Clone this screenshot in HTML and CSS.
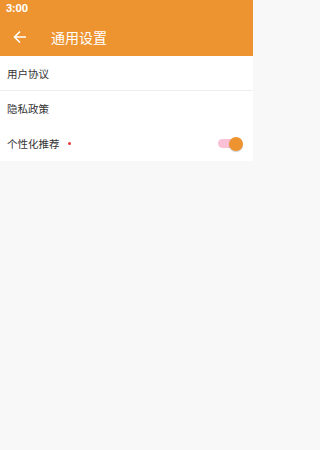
FILE: index.html
```html
<!DOCTYPE html>
<html lang="zh">
<head>
<meta charset="utf-8">
<link rel="stylesheet" href="styles.css">
</head>
<body>
<div class="page">
  <header class="top">
    <div class="status">3:00</div>
    <div class="appbar">
      <svg class="back" width="14" height="14" viewBox="0 0 14 14"><path d="M13 7H2M7 1.5L1.5 7L7 12.5" fill="none" stroke="#fff" stroke-width="1.6"/></svg>
      <span class="title">通用设置</span>
    </div>
  </header>
  <div class="list">
    <div class="row divided">用户协议</div>
    <div class="row">隐私政策</div>
    <div class="row">
      <span>个性化推荐</span><span class="dot"></span>
      <span class="toggle"><span class="thumb"></span></span>
    </div>
  </div>
</div>
</body>
</html>
```
FILE: styles.css
```css
html, body { margin: 0; padding: 0; }
body { font-family: Roboto, "Noto Sans CJK SC", sans-serif; background: #f8f8f8; overflow: hidden; }
.page { width: 253px; height: 450px; background: #f8f8f8; }
.top { background: #ed9431; color: #fff; height: 56px; }
.status { height: 17px; font-size: 11px; font-weight: 700; padding-left: 6px; line-height: 17px; }
.appbar { height: 39px; display: flex; align-items: center; }
.back { margin-left: 13px; }
.title { margin-left: 24px; font-size: 14px; }
.list { background: #fff; }
.row { height: 35px; display: flex; align-items: center; padding: 0 7px; font-size: 10.5px; color: #333; }
.divided { border-bottom: 1px solid #eee; height: 34px; }
.dot { width: 3px; height: 3px; border-radius: 50%; background: #e53935; margin-left: 8px; }
.toggle { margin-left: auto; margin-right: 8px; width: 20px; height: 9px; border-radius: 5px; background: #f9c0d6; position: relative; }
.thumb { position: absolute; width: 14px; height: 14px; border-radius: 50%; background: #ed9431; right: -5px; top: -2.5px; box-shadow: 0 1px 1px rgba(0,0,0,0.2); }
```
